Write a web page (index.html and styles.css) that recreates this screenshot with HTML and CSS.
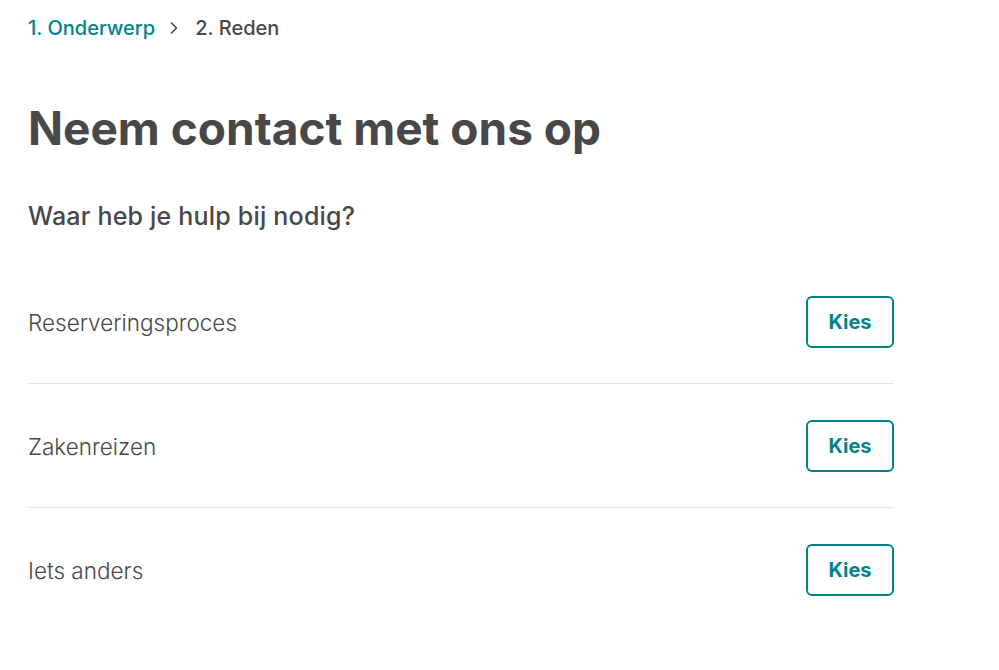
FILE: index.html
```html
<!DOCTYPE html>
<html lang="nl">
<head>
<meta charset="utf-8">
<link rel="stylesheet" href="styles.css">
</head>
<body>
<main class="page">
  <nav class="crumbs">
    <a class="crumb crumb-link" href="#">1. Onderwerp</a>
    <svg class="chev" viewBox="0 0 10 14" width="10" height="14" aria-hidden="true"><path d="M2.5 2 L7.5 7 L2.5 12" fill="none" stroke="#484848" stroke-width="1.6" stroke-linecap="round" stroke-linejoin="round"/></svg>
    <span class="crumb crumb-current">2. Reden</span>
  </nav>
  <h1 class="title">Neem contact met ons op</h1>
  <h2 class="subtitle">Waar heb je hulp bij nodig?</h2>
  <ul class="options">
    <li class="option"><span class="option-label">Reserveringsproces</span><button class="choose">Kies</button></li>
    <li class="option"><span class="option-label">Zakenreizen</span><button class="choose">Kies</button></li>
    <li class="option"><span class="option-label">Iets anders</span><button class="choose">Kies</button></li>
  </ul>
</main>
</body>
</html>
```
FILE: styles.css
```css
* { box-sizing: border-box; }
html, body { margin: 0; padding: 0; background: #fff; }
body { font-family: Inter, "Noto Sans", "Liberation Sans", sans-serif; color: #484848; }
.page { width: 894px; padding: 14px 0 0 28px; }
.crumbs { display: flex; align-items: center; height: 28px; font-size: 20px; }
.crumb { text-decoration: none; font-weight: 500; }
.crumb-link { color: #008489; }
.chev { margin: 0 16px 0 14px; }
.crumb-current { color: #484848; }
.title { margin: 58px 0 0; font-size: 46px; font-weight: 700; line-height: 56px; letter-spacing: 0; }
.subtitle { margin: 44px 0 0; font-size: 25px; font-weight: 500; line-height: 32px; letter-spacing: 0.2px; }
.options { list-style: none; margin: 28px 0 0; padding: 0; }
.option { display: flex; align-items: center; justify-content: space-between; padding: 36px 0 35px; border-bottom: 1px solid #e4e4e4; }
.option:last-child { border-bottom: none; }
.option-label { font-size: 22.5px; font-weight: 300; }
.choose { width: 88px; height: 52px; border: 2px solid #008489; border-radius: 6px; background: #fff; color: #008489; font-family: inherit; font-size: 20px; font-weight: 700; cursor: pointer; }
```
